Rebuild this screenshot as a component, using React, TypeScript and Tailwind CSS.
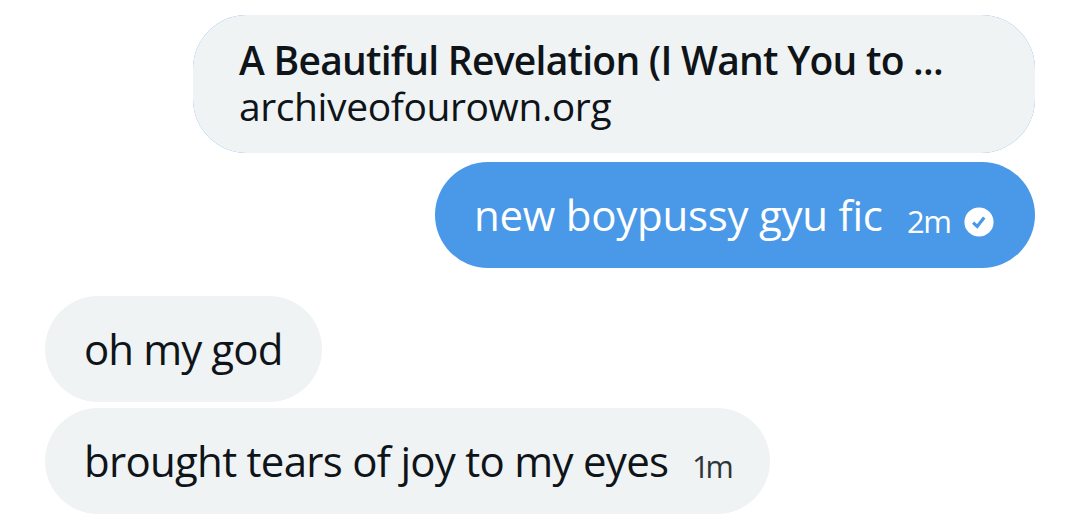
function SentIcon() {
  return (
    <svg className="ml-3.5 mt-4 h-[30px] w-[30px] shrink-0" viewBox="0 0 30 30">
      <circle cx="15" cy="15" r="14.6" fill="#fff" />
      <path
        d="M9.1 15.6 L13.2 19.4 L20.2 10.6"
        fill="none"
        stroke="#4a98e8"
        strokeWidth="3.2"
      />
    </svg>
  );
}

export default function App() {
  return (
    <main className="flex h-[528px] w-[1076px] flex-col overflow-hidden bg-white pl-[45px] pr-[41px] pt-[15px] font-['Open_Sans',sans-serif] text-[#0f1419]">
      <div className="h-[138px] w-[842px] shrink-0 self-end rounded-[54px] bg-[#4a98e8]">
        <a className="flex h-full w-full flex-col whitespace-nowrap rounded-[54px] bg-[#eff3f4] pl-[46px] pt-[22px] text-[39px] leading-[46px]">
          <b className="font-semibold tracking-[-0.74px]">
            A Beautiful Revelation (I Want You to ...
          </b>
          <span className="tracking-[-0.4px]">archiveofourown.org</span>
        </a>
      </div>

      <div className="mt-[9px] flex h-[106px] w-[600px] shrink-0 items-center self-end whitespace-nowrap rounded-[53px] bg-[#4a98e8] pb-0.5 pl-[39px] text-[42px] text-white">
        <p className="w-[433px] tracking-[-0.25px]">new boypussy gyu fic</p>
        <span className="w-[43px] pt-[14px] text-[31px] tracking-[-1.5px]">2m</span>
        <SentIcon />
      </div>

      <div className="mt-7 flex h-[106px] w-[277px] shrink-0 items-center whitespace-nowrap rounded-[53px] bg-[#eff3f4] pb-0.5 pl-[39px] text-[42px]">
        <p className="tracking-[-0.9px]">oh my god</p>
      </div>

      <div className="mt-1.5 flex h-[106px] w-[725px] shrink-0 items-center whitespace-nowrap rounded-[53px] bg-[#eff3f4] pb-0.5 pl-[39px] text-[42px]">
        <p className="w-[608px] tracking-[-0.72px]">brought tears of joy to my eyes</p>
        <span className="pt-[14px] text-[30.5px] tracking-[-4px] text-[#2e353a]">1m</span>
      </div>
    </main>
  );
}
